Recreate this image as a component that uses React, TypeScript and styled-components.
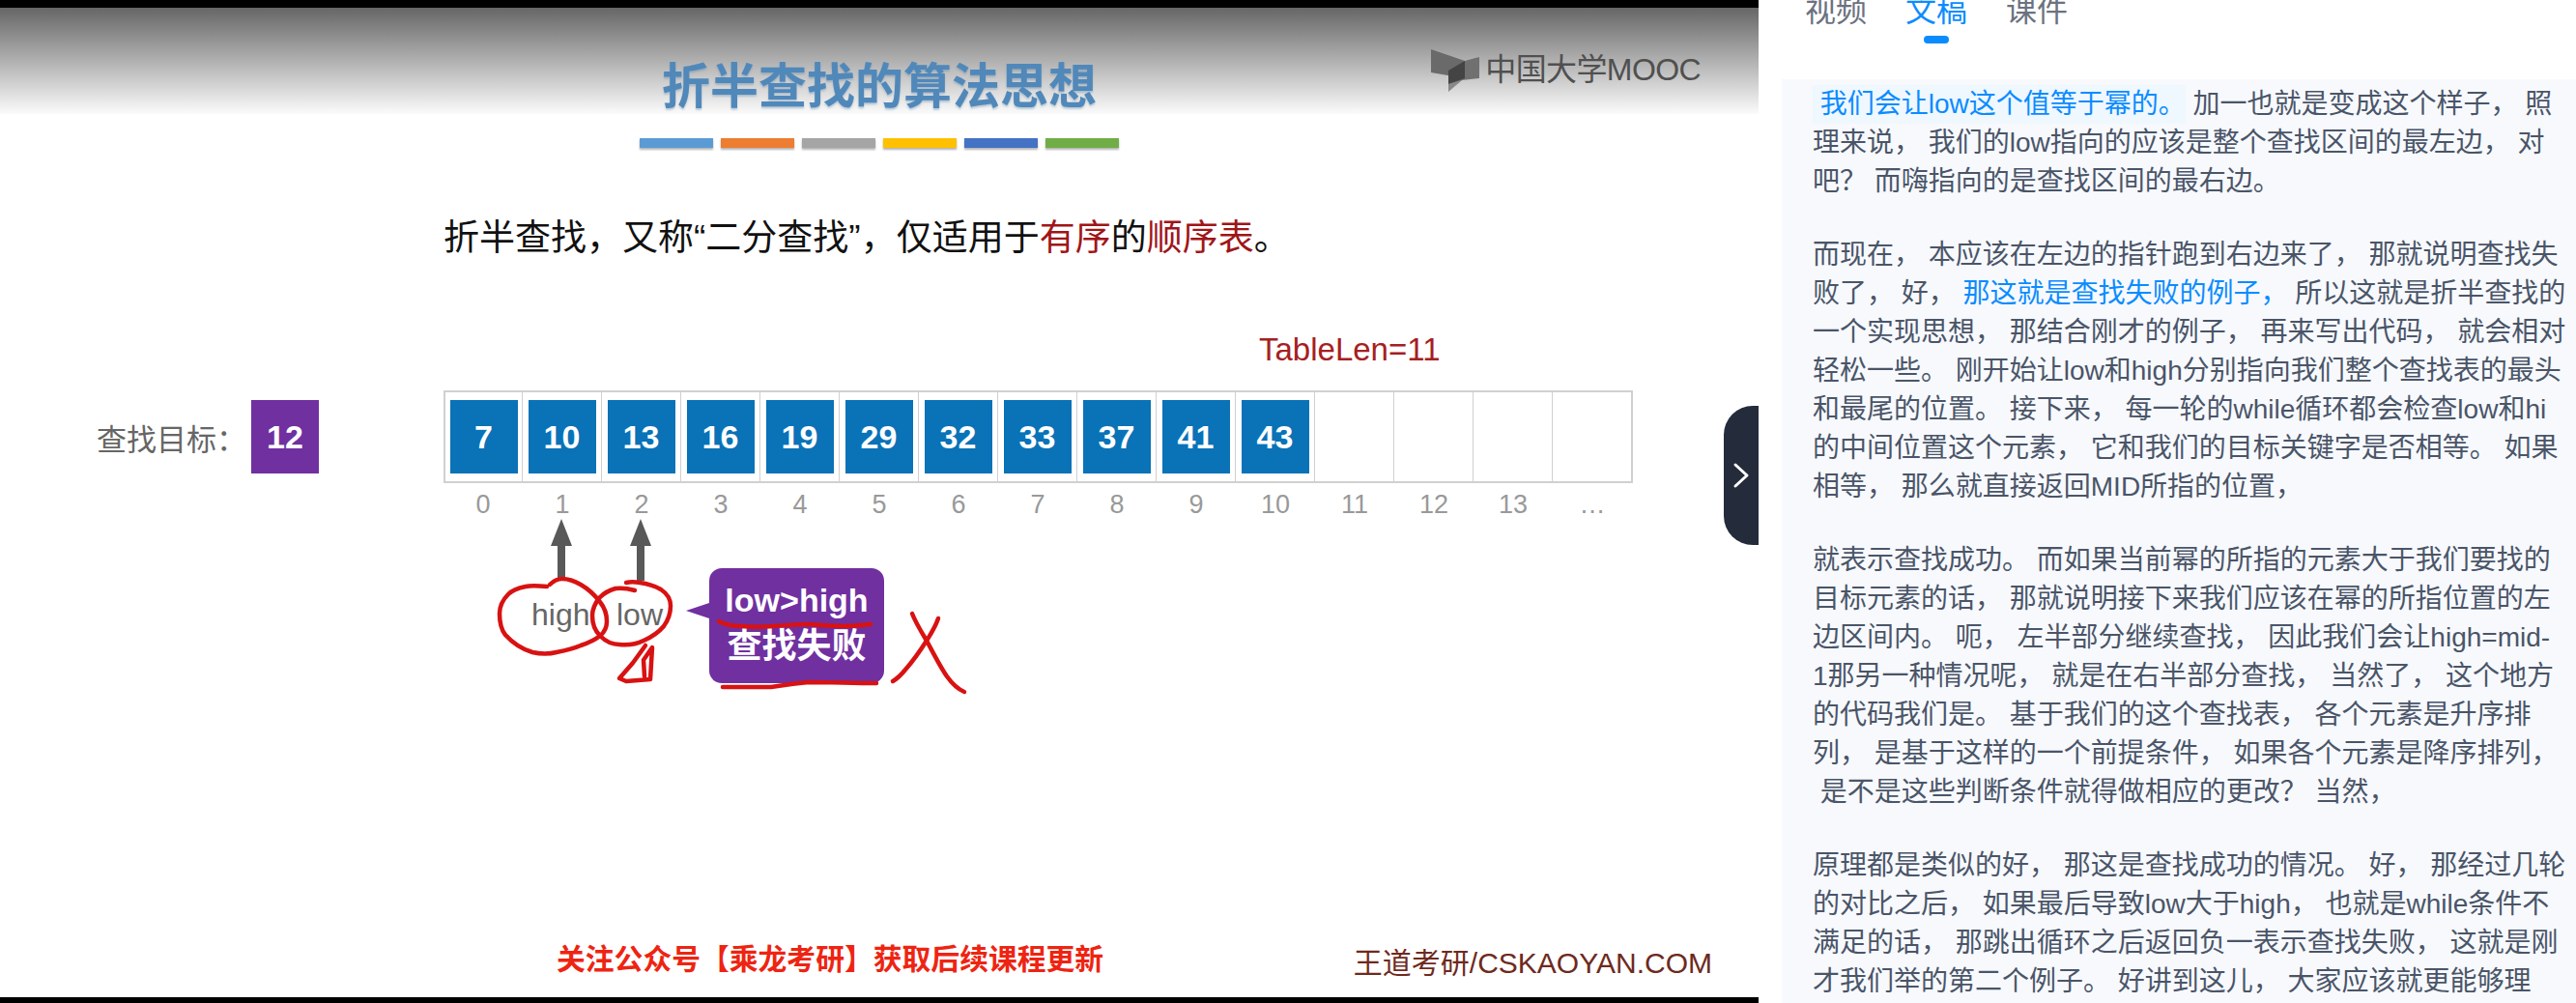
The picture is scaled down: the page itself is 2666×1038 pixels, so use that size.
import React, {FC} from 'react';
import styled, {createGlobalStyle} from 'styled-components';

const SANS = `"Liberation Sans", "Noto Sans CJK SC", sans-serif`;

const values = [7, 10, 13, 16, 19, 29, 32, 33, 37, 41, 43];
const indexes = ['0', '1', '2', '3', '4', '5', '6', '7', '8', '9', '10', '11', '12', '13', '…'];
const barColors = ['#5b9bd5', '#ed7d31', '#a5a5a5', '#ffc000', '#4472c4', '#70ad47'];

type Seg = {text: string, kind?: 'mark' | 'link'};

const paragraphs: Seg[][][] = [
    [
        [{text: ' 我们会让low这个值等于幂的。', kind: 'mark'}, {text: ' 加一也就是变成这个样子， 照'}],
        [{text: '理来说， 我们的low指向的应该是整个查找区间的最左边， 对'}],
        [{text: '吧？ 而嗨指向的是查找区间的最右边。'}],
    ],
    [
        [{text: '而现在， 本应该在左边的指针跑到右边来了， 那就说明查找失'}],
        [{text: '败了， 好， '}, {text: '那这就是查找失败的例子，', kind: 'link'}, {text: ' 所以这就是折半查找的'}],
        [{text: '一个实现思想， 那结合刚才的例子， 再来写出代码， 就会相对'}],
        [{text: '轻松一些。 刚开始让low和high分别指向我们整个查找表的最头'}],
        [{text: '和最尾的位置。 接下来， 每一轮的while循环都会检查low和hi'}],
        [{text: '的中间位置这个元素， 它和我们的目标关键字是否相等。 如果'}],
        [{text: '相等， 那么就直接返回MID所指的位置，'}],
    ],
    [
        [{text: '就表示查找成功。 而如果当前幂的所指的元素大于我们要找的'}],
        [{text: '目标元素的话， 那就说明接下来我们应该在幂的所指位置的左'}],
        [{text: '边区间内。 呃， 左半部分继续查找， 因此我们会让high=mid-'}],
        [{text: '1那另一种情况呢， 就是在右半部分查找， 当然了， 这个地方'}],
        [{text: '的代码我们是。 基于我们的这个查找表， 各个元素是升序排'}],
        [{text: '列， 是基于这样的一个前提条件， 如果各个元素是降序排列，'}],
        [{text: ' 是不是这些判断条件就得做相应的更改？ 当然，'}],
    ],
    [
        [{text: '原理都是类似的好， 那这是查找成功的情况。 好， 那经过几轮'}],
        [{text: '的对比之后， 如果最后导致low大于high， 也就是while条件不'}],
        [{text: '满足的话， 那跳出循环之后返回负一表示查找失败， 这就是刚'}],
        [{text: '才我们举的第二个例子。 好讲到这儿， 大家应该就更能够理'}],
    ],
];

const PointerArrow: FC = () => (
    <svg width="24" height="64" viewBox="0 0 24 64">
        <path d="M12 0 L23 28 L16 28 L16 64 L8 64 L8 28 L1 28 Z" fill="#595959"/>
    </svg>
);

const App: FC = () => {
    return (
        <Page>
            <GlobalStyle/>
            <Video>
                <Header>
                    <span/>
                    <Title>折半查找的算法思想</Title>
                    <Logo>
                        <svg width="56" height="52" viewBox="0 0 56 52">
                            <polygon points="0,0 35,12 35,30 0,24" fill="#6a6a6a"/>
                            <polygon points="18,22 35,12 50,8 50,30 32,32 18,42" fill="#707070"/>
                            <polygon points="18,22 35,12 35,30 18,36" fill="#444"/>
                            <polygon points="18,36 32,32 18,44" fill="#888"/>
                        </svg>
                        <LogoText>中国大学MOOC</LogoText>
                    </Logo>
                </Header>
                <Bars>
                    {barColors.map(c => <Bar key={c} $color={c}/>)}
                </Bars>
                <Lead>
                    折半查找，又称“二分查找”，仅适用于<Accent>有序</Accent>的<Accent>顺序表</Accent>。
                </Lead>
                <TableLen>TableLen=11</TableLen>
                <ArrayRow>
                    <Target>查找目标：</Target>
                    <ValueBox $color="#7030a0">12</ValueBox>
                    <Cells>
                        {indexes.map((idx, i) => (
                            <Cell key={idx}>
                                {values[i] !== undefined && <ValueBox $color="#0a72b7">{values[i]}</ValueBox>}
                            </Cell>
                        ))}
                    </Cells>
                </ArrayRow>
                <Indexes>
                    {indexes.map(idx => <IndexLabel key={idx}>{idx}</IndexLabel>)}
                </Indexes>
                <Pointers>
                    <PointerArrow/>
                    <PointerArrow/>
                </Pointers>
                <StateRow>
                    <PointerName $width={88}>high</PointerName>
                    <PointerName $width={49}>low</PointerName>
                    <Callout>
                        <span>low&gt;high</span>
                        <CalloutLine>查找失败</CalloutLine>
                    </Callout>
                </StateRow>
                <Footer>
                    <Notice>关注公众号【乘龙考研】获取后续课程更新</Notice>
                    <Site>王道考研/CSKAOYAN.COM</Site>
                </Footer>
                <Ink viewBox="0 0 1820 1038">
                    <path d="M566 607 C556 606 548 606 544 607 C534 609 529 612 526 615 C520 621 517 628 517 635 C517 645 519 652 523 657 C532 667 541 672 551 675 C560 677 568 677 576 675 C586 673 594 671 601 668 C610 665 616 662 621 658 C626 654 628 649 628 643 C628 635 625 628 621 623 C615 615 608 609 601 605 C594 601 588 599 582 599 C576 599 572 602 569 605"/>
                    <path d="M657 611 C650 609 644 608 637 609 C630 611 625 614 621 618 C616 624 613 630 613 637 C613 646 616 653 621 658 C627 664 634 667 641 667 C650 668 658 667 666 663 C675 659 682 654 687 648 C692 641 694 634 694 627 C694 619 690 614 684 610 C677 606 670 604 662 603 C657 602 652 602 648 603"/>
                    <path d="M668 668 L655 686 L641 702 L648 705 L673 703 L675 670 L666 683 L667 700"/>
                    <path d="M744 643 C752 647 758 648 766 648 C778 649 790 649 801 648 C813 647 825 646 837 646 C849 647 861 648 873 648 C883 648 892 647 901 646"/>
                    <path d="M748 711 L798 711 C811 709 824 707 837 706 C860 706 884 707 907 707"/>
                    <path d="M944 635 C948 645 953 653 959 663 C966 676 973 690 980 700 C985 707 991 713 998 716"/>
                    <path d="M971 640 C968 649 964 655 959 663 C952 674 945 684 937 693 C933 698 929 702 924 705"/>
                </Ink>
                <Handle>
                    <svg width="18" height="28" viewBox="0 0 18 28">
                        <path d="M3 3 L15 14 L3 25" fill="none" stroke="#fff" strokeWidth="3" strokeLinecap="round" strokeLinejoin="round"/>
                    </svg>
                </Handle>
            </Video>
            <Side>
                <Tabs>
                    <Tab>视频</Tab>
                    <Tab $active>文稿<TabDot/></Tab>
                    <Tab>课件</Tab>
                </Tabs>
                <Transcript>
                    {paragraphs.map((lines, p) => (
                        <Paragraph key={p}>
                            {lines.map((segs, l) => (
                                <Line key={l}>
                                    {segs.map((seg, s) => <Segment key={s} $kind={seg.kind}>{seg.text}</Segment>)}
                                </Line>
                            ))}
                        </Paragraph>
                    ))}
                </Transcript>
            </Side>
        </Page>
    );
};

export default App;


const GlobalStyle = createGlobalStyle`
  html, body {
    margin: 0;
    padding: 0;
    background: #fff;
    overflow: hidden;
  }
`
const Page = styled.div`
  display: flex;
  width: 2666px;
  height: 1038px;
  overflow: hidden;
  font-family: ${SANS};
`
const Video = styled.div`
  position: relative;
  display: flex;
  flex-direction: column;
  flex: none;
  box-sizing: border-box;
  width: 1820px;
  height: 1038px;
  border-top: 8px solid #000;
  border-bottom: 6px solid #000;
  background: #fff;
`
const Header = styled.div`
  display: grid;
  grid-template-columns: 1fr auto 1fr;
  align-items: start;
  flex: none;
  height: 110px;
  background: linear-gradient(180deg, #666 0%, #fbfbfb 100%);
`
const Title = styled.h1`
  margin: 52px 0 0;
  font-size: 50px;
  line-height: 60px;
  font-weight: 700;
  color: #5188ba;
  text-shadow: 0 2px 2px rgba(80, 130, 170, .35);
`
const Logo = styled.div`
  display: flex;
  justify-self: end;
  margin: 43px 60px 0 0;
`
const LogoText = styled.span`
  font-size: 32px;
  line-height: 36px;
  margin-top: 3px;
  color: #505050;
  letter-spacing: -.6px;
`
const Bars = styled.div`
  display: flex;
  justify-content: center;
  gap: 8px;
  flex: none;
  margin-top: 25px;
`
const Bar = styled.div<{$color: string}>`
  width: 76px;
  height: 10px;
  background: ${({$color}) => $color};
  box-shadow: 0 2px 2px rgba(0, 0, 0, .3);
`
const Lead = styled.p`
  margin: 72px 0 0 459px;
  font-size: 37px;
  line-height: 44px;
  color: #111;
  white-space: nowrap;
`
const Accent = styled.span`
  color: #a01518;
`
const TableLen = styled.div`
  margin: 75px 0 0 1303px;
  font-size: 33px;
  line-height: 36px;
  color: #a52022;
`
const ArrayRow = styled.div`
  display: flex;
  align-items: center;
  height: 96px;
  margin: 24px 0 0 100px;
`
const Target = styled.span`
  width: 160px;
  font-size: 31px;
  color: #666;
`
const ValueBox = styled.div<{$color: string}>`
  display: flex;
  align-items: center;
  justify-content: center;
  width: 70px;
  height: 76px;
  box-sizing: border-box;
  background: ${({$color}) => $color};
  font-size: 34px;
  font-weight: 700;
  color: #fff;
`
const Cells = styled.div`
  display: flex;
  height: 96px;
  margin-left: 129px;
  border: 2px solid #d0d0d0;
  box-sizing: border-box;
`
const Cell = styled.div`
  display: flex;
  align-items: center;
  justify-content: center;
  box-sizing: border-box;
  width: 82px;
  height: 92px;
  border-left: 1.5px solid #d0d0d0;

  &:first-child {
    width: 79px;
    border-left: none;
  }
`
const Indexes = styled.div`
  display: flex;
  margin: 4px 0 0 459px;
`
const IndexLabel = styled.span`
  width: 82px;
  font-size: 27px;
  line-height: 36px;
  text-align: center;
  color: #999;
`
const Pointers = styled.div`
  display: flex;
  gap: 58px;
  margin: -3px 0 0 569px;
  line-height: 0;
`
const StateRow = styled.div`
  display: flex;
  align-items: flex-start;
  margin: -13px 0 0 550px;
`
const PointerName = styled.span<{$width: number}>`
  width: ${({$width}) => $width}px;
  margin-top: 24px;
  font-size: 32px;
  line-height: 48px;
  color: #666;
`
const Callout = styled.div`
  position: relative;
  display: flex;
  flex-direction: column;
  align-items: center;
  box-sizing: border-box;
  width: 181px;
  height: 119px;
  margin-left: 47px;
  padding-top: 13px;
  border-radius: 13px;
  background: #7030a0;
  font-size: 34px;
  line-height: 40px;
  font-weight: 700;
  color: #fff;

  &::before {
    content: '';
    position: absolute;
    left: -24px;
    top: 36px;
    border-style: solid;
    border-width: 8px 24px 8px 0;
    border-color: transparent #7030a0 transparent transparent;
  }
`
const CalloutLine = styled.span`
  margin-top: 8px;
  font-size: 36px;
`
const Footer = styled.div`
  display: flex;
  align-items: flex-end;
  justify-content: space-between;
  margin: auto 48px 21px 576px;
`
const Notice = styled.span`
  font-size: 29.8px;
  line-height: 36px;
  font-weight: 700;
  color: #ee2412;
`
const Site = styled.span`
  font-size: 30px;
  line-height: 36px;
  color: #6e2a1e;
  margin-bottom: -4px;
`
const Ink = styled.svg`
  position: absolute;
  left: 0;
  top: -8px;
  width: 1820px;
  height: 1038px;
  fill: none;
  stroke: #d81212;
  stroke-width: 4.5;
  stroke-linecap: round;
  stroke-linejoin: round;
  pointer-events: none;
`
const Handle = styled.button`
  position: absolute;
  right: 0;
  top: 412px;
  display: flex;
  align-items: center;
  justify-content: center;
  width: 36px;
  height: 144px;
  padding: 0;
  border: none;
  border-radius: 30px 0 0 30px;
  background: #242b3b;
  cursor: pointer;
`
const Side = styled.div`
  flex: 1;
  min-width: 0;
  height: 1038px;
  overflow: hidden;
  padding-left: 24px;
`
const Tabs = styled.div`
  display: flex;
  gap: 40px;
  margin: -9px 0 0 24px;
  height: 91px;
`
const Tab = styled.div<{$active?: boolean}>`
  position: relative;
  width: 64px;
  font-size: 32px;
  line-height: 40px;
  color: ${({$active}) => $active ? '#0a8cff' : '#6b7280'};
`
const TabDot = styled.i`
  display: block;
  width: 26px;
  height: 8px;
  margin: 6px auto 0;
  border-radius: 4px;
  background: #0a8cff;
`
const Transcript = styled.div`
  box-sizing: border-box;
  height: 956px;
  padding: 6px 0 0 32px;
  background: #f7f9fd;
`
const Paragraph = styled.div`
  margin-bottom: 36px;
`
const Line = styled.div`
  font-size: 28px;
  line-height: 40px;
  color: #4a5568;
  white-space: pre;
`
const Segment = styled.span<{$kind?: 'mark' | 'link'}>`
  ${({$kind}) => $kind ? 'color: #0a8cff;' : ''}
  ${({$kind}) => $kind === 'mark' ? 'display: inline-block; background: #eff7ff;' : ''}
`
